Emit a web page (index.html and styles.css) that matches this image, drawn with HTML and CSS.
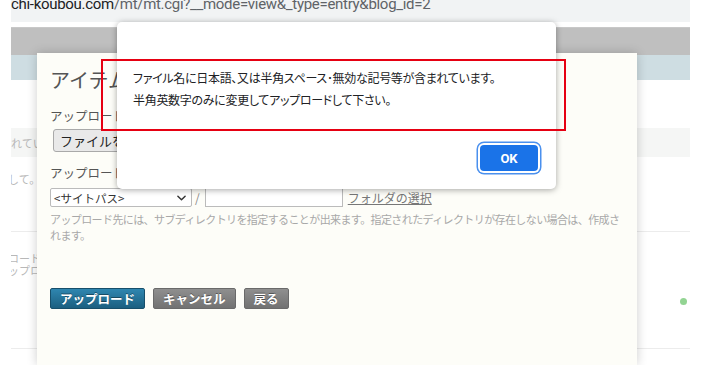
FILE: index.html
```html
<!DOCTYPE html>
<html lang="ja">
<head>
  <meta charset="UTF-8" />
  <title>アイテムのアップロード</title>
  <link rel="stylesheet" href="styles.css">
</head>
<body>
  <div class="browser">
    <div class="urlbar">
      <div class="url"><span class="host">chi-koubou.com</span><span class="path">/mt/mt.cgi?__mode=view&amp;_type=entry&amp;blog_id=2</span></div>
    </div>

    <div class="page">
      <div class="header-band"></div>
      <div class="nav-band"></div>
      <div class="row row-a"></div>
      <div class="row row-b"><span class="ghost">れています</span></div>
      <div class="row row-c"><span class="ghost ghost-cut">して。</span></div>
      <div class="row row-e">
        <span class="ghost ghost-cut ghost-two">ロード<br>ップロ</span>
        <span class="dot"></span>
      </div>
      <div class="row row-f"></div>
    </div>
  </div>

  <!-- MT のアップロードダイアログ -->
  <div class="modal">
    <h1 class="modal-title">アイテムのアップロード</h1>

    <div class="field-label">アップロードするファイル</div>
    <button class="file-button">ファイルを選択</button>

    <div class="field-label field-label-2">アップロード先</div>
    <div class="dest-row">
      <div class="select">
        <span>&lt;サイトパス&gt;</span>
        <svg class="chevron" viewBox="0 0 10 6" width="9" height="6">
          <path d="M1 1l4 4 4-4" fill="none" stroke="#333" stroke-width="1.6" stroke-linecap="round" stroke-linejoin="round" />
        </svg>
      </div>
      <span class="slash">/</span>
      <div class="text-input"></div>
      <a class="folder-link" href="#">フォルダの選択</a>
    </div>

    <p class="hint">アップロード先には、サブディレクトリを指定することが出来ます。指定されたディレクトリが存在しない場合は、作成されます。</p>

    <div class="actions">
      <button class="btn btn-primary">アップロード</button>
      <button class="btn">キャンセル</button>
      <button class="btn">戻る</button>
    </div>
  </div>

  <!-- ブラウザの alert() -->
  <div class="alert">
    <div class="alert-body">
      <div>ファイル名に日本語、又は半角スペース･無効な記号等が含まれています。</div>
      <div>半角英数字のみに変更してアップロードして下さい。</div>
    </div>
    <div class="alert-footer">
      <button class="ok-button">OK</button>
    </div>
  </div>

  <div class="highlight"></div>
</body>
</html>
```

FILE: styles.css
```css
html,
body {
  height: 365px;
  overflow: hidden;
}

body {
  margin: 0;
  background: #fff;
  font-family: 'Noto Sans CJK JP', sans-serif;
  position: relative;
}

.browser {
  padding: 0 17px 0 11px;
}

.urlbar {
  height: 22px;
  background: #f1f3f4;
  overflow: hidden;
}

.url {
  font-family: 'Roboto', sans-serif;
  font-size: 15px;
  letter-spacing: -0.3px;
  line-height: 18px;
  margin-top: -5px;
  white-space: nowrap;
  color: #5f6368;
}

.url .host {
  color: #202124;
}

.page {
  margin-top: 5px;
  overflow: hidden;
}

.header-band {
  height: 28px;
  background: #bfbfbf;
  border-top: 1px solid #c8c8c8;
  box-sizing: border-box;
}

.nav-band {
  height: 25px;
  background: #cedde2;
}

.row {
  box-sizing: border-box;
  font-size: 11px;
  color: #b8b8b8;
}

.row-a {
  height: 48px;
}

.row-b {
  height: 29px;
  background: #f5f6f5;
  padding-top: 7px;
}

.row-c {
  height: 75px;
  padding-top: 14px;
  border-bottom: 1px solid #ececec;
}

.row-e {
  height: 117px;
  border-bottom: 1px solid #ececec;
  display: flex;
  justify-content: space-between;
  align-items: flex-start;
  padding-top: 20px;
}

.row-f {
  height: 10px;
}

.ghost {
  white-space: nowrap;
  line-height: 14px;
}

.ghost-cut {
  margin-left: -3px;
}

.ghost-two {
  line-height: 12px;
}

.dot {
  width: 7px;
  height: 7px;
  border-radius: 50%;
  background: #93d493;
  margin-top: 46px;
  margin-right: 3px;
}

/* dialog */
.modal {
  position: absolute;
  left: 37px;
  top: 53px;
  width: 600px;
  bottom: 0;
  background: #fdfdf8;
  box-shadow: 0 0 10px rgba(0, 0, 0, 0.2);
  padding: 0 13px;
  box-sizing: border-box;
  color: #555;
}

.modal-title {
  margin: 13px 0 0;
  font-size: 20px;
  font-weight: 400;
  line-height: 28px;
  white-space: nowrap;
}

.field-label {
  margin-top: 13px;
  font-size: 12.5px;
  line-height: 18px;
}

.field-label-2 {
  margin-top: 12px;
}

.file-button {
  display: block;
  margin: 4px 0 0 3px;
  height: 23px;
  padding: 0 6px;
  font-family: inherit;
  font-size: 13px;
  color: #222;
  background: #e9e9e9;
  border: 1px solid #a9a9a9;
  border-radius: 3px;
}

.dest-row {
  margin-top: 6px;
  display: flex;
  align-items: center;
  height: 19px;
}

.select {
  width: 142px;
  height: 19px;
  box-sizing: border-box;
  border: 1px solid #bbb;
  border-radius: 2px;
  background: #fff;
  display: flex;
  align-items: center;
  justify-content: space-between;
  padding: 0 5px 0 3px;
  font-size: 11.5px;
  color: #333;
}

.slash {
  margin: 0 5px 0 3px;
  font-size: 12px;
  color: #888;
}

.text-input {
  width: 138px;
  height: 19px;
  box-sizing: border-box;
  border: 1px solid #bbb;
  background: #fff;
}

.folder-link {
  margin-left: 5px;
  font-size: 12px;
  color: #777;
  text-decoration: underline;
}

.hint {
  margin: 4px 0 0;
  font-size: 11px;
  letter-spacing: -0.6px;
  line-height: 16px;
  color: #a8a8a8;
}

.actions {
  margin-top: 45px;
  display: flex;
  gap: 8px;
}

.btn {
  height: 21px;
  padding: 0 9px;
  font-family: inherit;
  font-size: 12.5px;
  font-weight: 700;
  line-height: 19px;
  color: #fff;
  text-shadow: 0 -1px 0 rgba(0, 0, 0, 0.4);
  background: linear-gradient(#8f8f8f, #727272);
  border: 1px solid #6a6a6a;
  border-radius: 2px;
}

.btn-primary {
  background: linear-gradient(#2f86b0, #1b5f80);
  border-color: #174f6b;
}

/* alert */
.alert {
  position: absolute;
  left: 117px;
  top: 22px;
  width: 439px;
  height: 167px;
  background: #fff;
  border-radius: 5px;
  box-shadow: 0 1px 6px rgba(0, 0, 0, 0.35);
  box-sizing: border-box;
  padding: 45px 18px 0 16px;
  color: #202124;
}

.alert-body {
  font-size: 12px;
  letter-spacing: -0.3px;
  line-height: 22px;
  font-feature-settings: "palt";
}

.alert-footer {
  margin-top: 34px;
  display: flex;
  justify-content: flex-end;
}

.ok-button {
  width: 58px;
  height: 26px;
  border: none;
  border-radius: 4px;
  background: #1a73e8;
  color: #fff;
  font-family: 'Roboto', sans-serif;
  font-size: 13px;
  font-weight: 700;
  box-shadow: 0 0 0 2px #fff, 0 0 0 3.5px #4a90ee;
}

.highlight {
  position: absolute;
  left: 101px;
  top: 59px;
  width: 465px;
  height: 72px;
  box-sizing: border-box;
  border: 2px solid #e60012;
}
```
